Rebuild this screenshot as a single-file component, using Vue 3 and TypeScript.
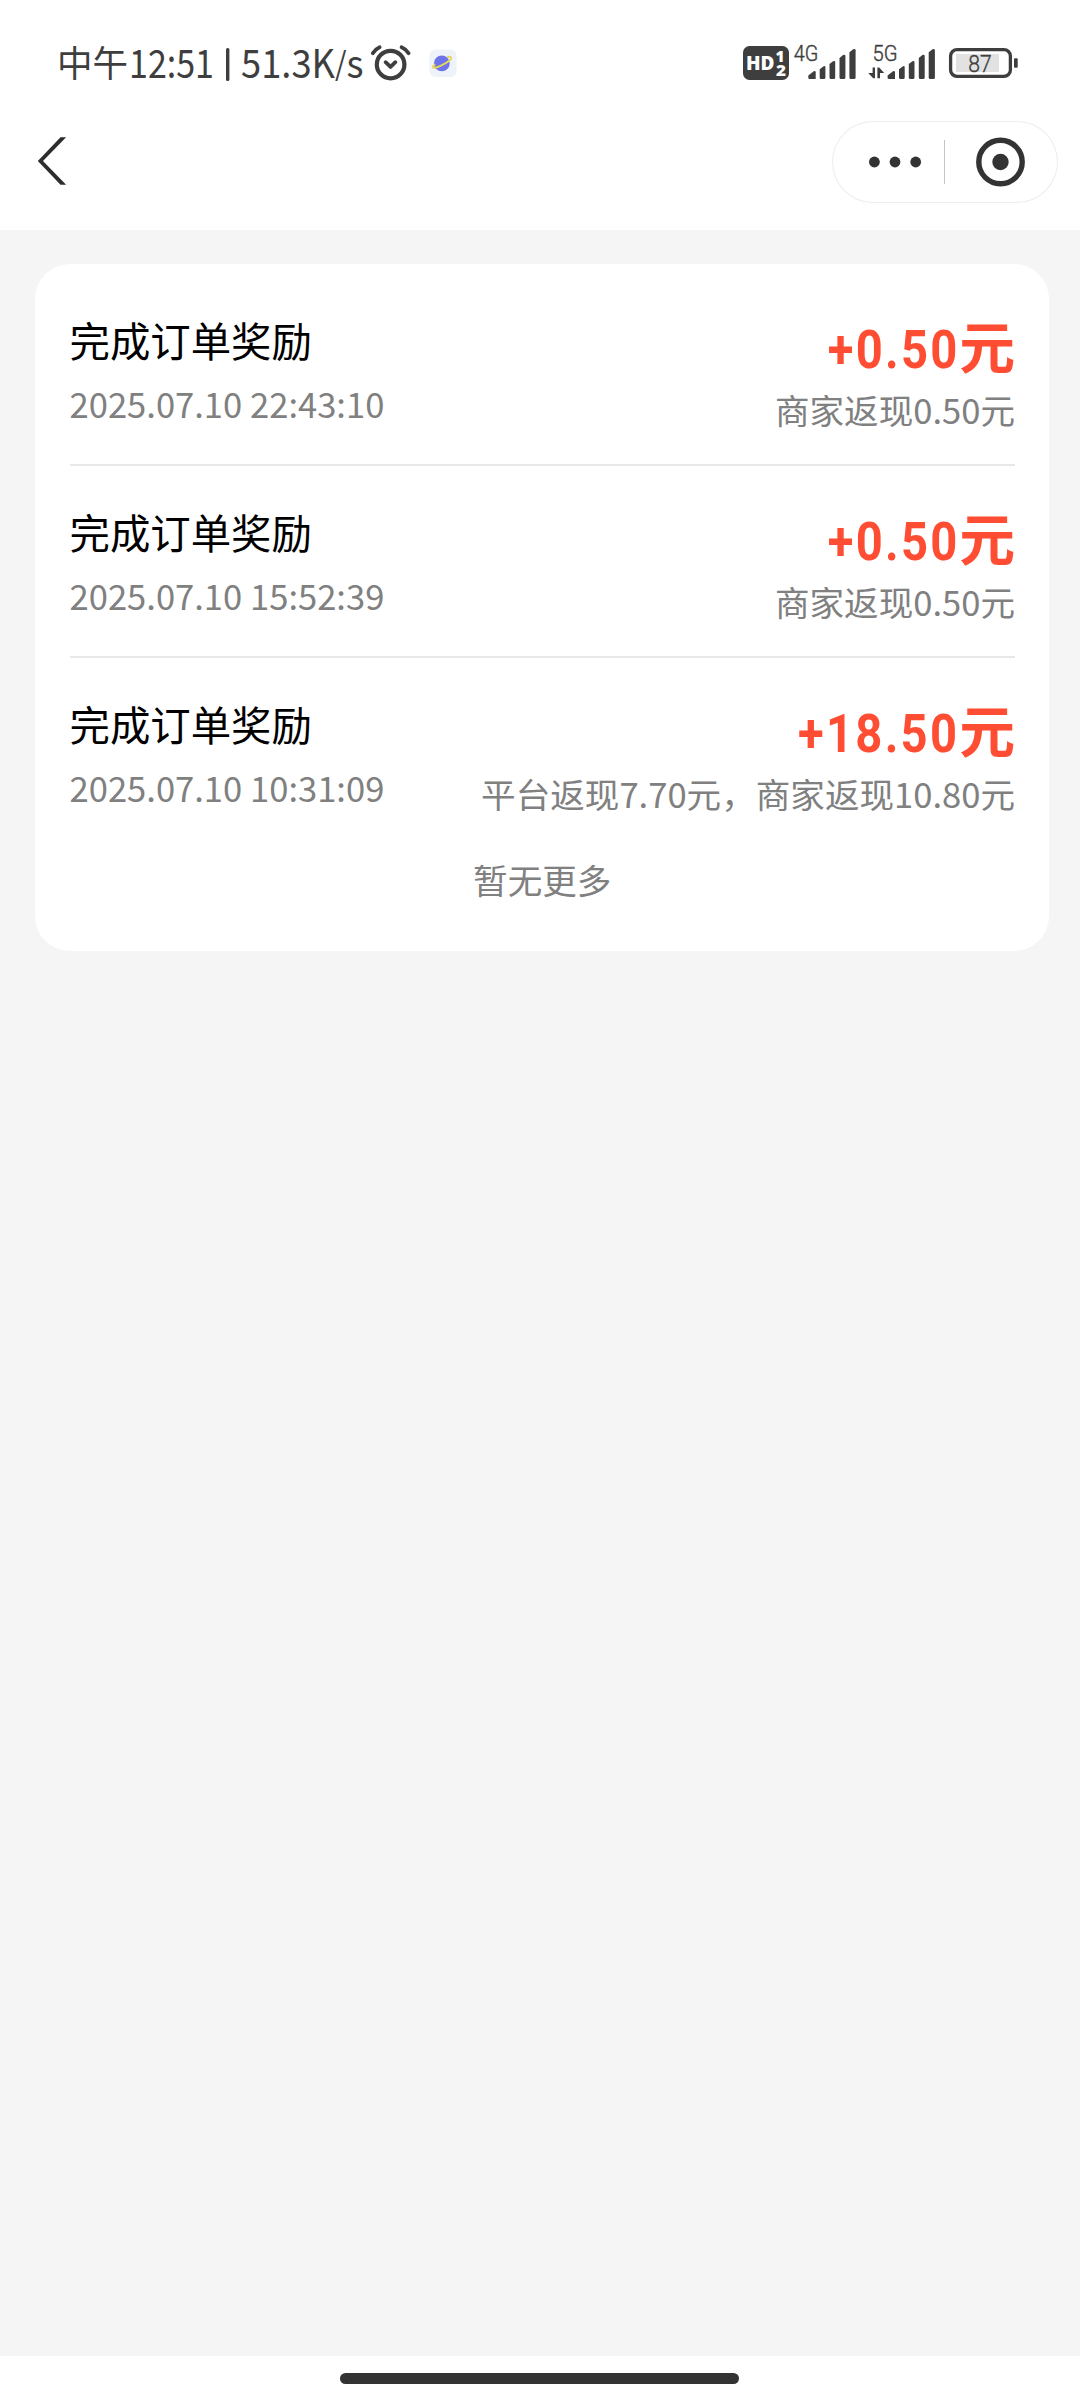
<script setup lang="ts">
interface RewardRecord {
  title: string
  time: string
  amount: string
  detail: string
}

const records: RewardRecord[] = [
  { title: '完成订单奖励', time: '2025.07.10 22:43:10', amount: '+0.50', detail: '商家返现0.50元' },
  { title: '完成订单奖励', time: '2025.07.10 15:52:39', amount: '+0.50', detail: '商家返现0.50元' },
  { title: '完成订单奖励', time: '2025.07.10 10:31:09', amount: '+18.50', detail: '平台返现7.70元，商家返现10.80元' },
]
</script>

<template>
  <div class="screen">
    <header class="top">
      <div class="status">
        <svg class="clock" width="310" height="64" viewBox="56 30 310 64">
          <text x="57" y="76.7" font-size="36.5" textLength="71" lengthAdjust="spacingAndGlyphs">中午</text>
          <text x="129" y="77.5" font-size="39.5" textLength="85" lengthAdjust="spacingAndGlyphs">12:51</text>
          <rect x="226" y="48" width="3.4" height="33" rx="1.5" />
          <text x="241" y="77.5" font-size="39.5" textLength="122.5" lengthAdjust="spacingAndGlyphs">51.3K<tspan font-size="32" dy="-2.2">/</tspan><tspan dy="2.2">s</tspan></text>
        </svg>
        <svg class="alarm" width="42" height="40" viewBox="370 43 42 40">
          <g fill="none" stroke="#3e3e3e" stroke-linecap="round" stroke-linejoin="round">
            <circle cx="390.6" cy="64.6" r="13.8" stroke-width="4.2" />
            <path d="M385.6 62.2l4.9 4.7 4.9-4.7" stroke-width="3.8" />
            <path d="M372.8 53.2q2.6-4.2 6.8-6M401.6 47.2q4.4 1.8 7 6" stroke-width="3.8" />
          </g>
        </svg>
        <svg class="planet" width="28" height="30" viewBox="429 48 28 30">
          <rect x="429.5" y="49.5" width="27" height="27.5" rx="6" fill="#eef2f9" />
          <circle cx="441.8" cy="63.4" r="7.9" fill="#6d74ea" />
          <path d="M434.6 64.6c-3.8 3.6-1.6 4.4 6 1.2 7-3 12.4-7.3 10-8.8-.7-.4-1.6-.2-2.6 0" fill="none" stroke="#e2d75a" stroke-width="1.9" stroke-linecap="round" />
        </svg>
        <div class="grow"></div>
        <svg class="radio" width="280" height="40" viewBox="741 43 280 40">
          <rect x="743" y="46" width="46" height="34" rx="6.5" fill="#3e3e3e" />
          <text class="hd" x="746" y="70.2" font-size="20" textLength="28.5" lengthAdjust="spacingAndGlyphs">HD</text>
          <text class="hd" x="775.5" y="62" font-size="16" textLength="9" lengthAdjust="spacingAndGlyphs">1</text>
          <text class="hd" x="776" y="76.2" font-size="16" textLength="10" lengthAdjust="spacingAndGlyphs">2</text>
          <text class="net" x="793.8" y="61" font-size="21.5" textLength="24.5" lengthAdjust="spacingAndGlyphs">4G</text>
          <g id="bars" fill="#3e3e3e">
            <path d="M808.3 77.5v-2l5.4-4.3q2-.8 2 1V79h-6q-1.4 0-1.4-1.5z" />
            <path d="M819.7 77.5v-8.3l3.6-2.800q2.100-.9 2.100 1V77.500q0 1.500-1.500 1.500h-2.700q-1.500 0-1.500-1.500z" />
            <path d="M829.5 77.5v-13.4l3.6-2.900q2.100-.9 2.100 1V77.500q0 1.500-1.500 1.500h-2.700q-1.500 0-1.500-1.500z" />
            <path d="M839.5 77.5v-19.4l3.6-3q2.3-.9 2.300 1V77.500q0 1.500-1.500 1.500h-2.900q-1.500 0-1.500-1.500z" />
            <path d="M849.4 77.5v-25.2l3.8-3.100q2.400-.9 2.400 1V77.500q0 1.500-1.500 1.500h-3.200q-1.500 0-1.500-1.500z" />
          </g>
          <use href="#bars" x="79.3" />
          <text class="net" x="872.5" y="61" font-size="21.5" textLength="25" lengthAdjust="spacingAndGlyphs">5G</text>
          <path d="M872.6 67.5h2.4v10.8h-1.8l-5-5.3h4.4zM877.4 78.3V67.5h1.8l5 5.5h-4.2v5.3z" fill="#3e3e3e" />
          <rect x="956" y="54" width="43" height="18" fill="#e2e2e2" />
          <rect x="950.6" y="49.6" width="59.8" height="26.8" rx="6.5" fill="none" stroke="#3e3e3e" stroke-width="3.3" />
          <rect x="1014" y="58.3" width="3.7" height="9.4" rx="1" fill="#3e3e3e" />
          <text class="pct" x="968.3" y="71.7" font-size="24.5" textLength="23.5" lengthAdjust="spacingAndGlyphs">87</text>
        </svg>
      </div>
      <nav class="nav">
        <svg class="back" width="30" height="48" viewBox="37 137 30 48">
          <path d="M60.5 137.300h5.6L43 161l23.100 23.700h-5.600L37.800 161z" fill="#2d2d2f" />
        </svg>
        <div class="capsule">
          <svg width="226" height="82" viewBox="832 121 226 82">
            <g fill="#333">
              <circle cx="874.4" cy="162" r="5.4" />
              <circle cx="895" cy="162" r="5.4" />
              <circle cx="915.7" cy="162" r="5.4" />
              <circle cx="1000.5" cy="162" r="8.2" />
            </g>
            <rect x="944" y="140" width="1" height="44" fill="#c4c4c4" />
            <circle cx="1000.5" cy="162" r="21.7" fill="none" stroke="#333" stroke-width="5.4" />
          </svg>
        </div>
      </nav>
    </header>

    <main class="body">
      <section class="card">
        <article v-for="record in records" :key="record.time" class="row">
          <div class="left">
            <div class="title">{{ record.title }}</div>
            <div class="time">{{ record.time }}</div>
          </div>
          <div class="right">
            <div class="amount"><span class="num">{{ record.amount }}</span><span class="unit">元</span></div>
            <div class="detail">{{ record.detail }}</div>
          </div>
        </article>
        <div class="end">暂无更多</div>
      </section>
    </main>

    <footer class="home"><div class="pill"></div></footer>
  </div>
</template>

<style>
body {
  margin: 0;
  background: #f5f5f5;
}
</style>

<style scoped>
.screen {
  width: 1080px;
  height: 2400px;
  display: flex;
  flex-direction: column;
  background: #f5f5f5;
  font-family: "Noto Sans CJK SC", "Noto Sans", sans-serif;
}
.top {
  height: 230px;
  background: #fff;
}
.status {
  height: 121px;
  box-sizing: border-box;
  padding: 30px 59px 0 56px;
  display: flex;
  align-items: flex-start;
}
.status svg {
  display: block;
  flex: none;
}
.clock {
  fill: #3e3e3e;
}
.alarm {
  margin: 13px 0 0 4px;
}
.planet {
  margin: 18px 0 0 17px;
}
.radio {
  margin-top: 13px;
}
.grow {
  flex: 1;
}
.hd {
  font-family: "Open Sans", sans-serif;
  font-weight: 800;
  fill: #fff;
}
.net,
.pct {
  font-family: Roboto, sans-serif;
  font-weight: 300;
  fill: #3e3e3e;
  stroke: #3e3e3e;
  stroke-width: 0.4px;
}
.nav {
  height: 82px;
  padding: 0 22px 0 37px;
  display: flex;
  align-items: center;
  justify-content: space-between;
}
.back {
  display: block;
  margin-bottom: 2px;
}
.capsule {
  width: 226px;
  height: 82px;
  border-radius: 41px;
  box-shadow: inset 0 0 0 1px #ededed;
}
.capsule svg {
  display: block;
}
.body {
  flex: 1;
  padding: 34px 31px 0 35px;
}
.card {
  height: 687px;
  box-sizing: border-box;
  padding: 10px 34px 0 34.5px;
  border-radius: 35px;
  background: #fff;
}
.row {
  height: 192px;
  box-sizing: border-box;
  padding-top: 38px;
  display: flex;
  justify-content: space-between;
  white-space: nowrap;
  border-bottom: 2px solid #e8e8e8;
}
.row:nth-child(3) {
  border-bottom-color: transparent;
}
.title {
  font-size: 40.4px;
  line-height: 56px;
  color: #000;
}
.time,
.detail,
.end {
  font-size: 34.6px;
  line-height: 50px;
  color: #808080;
}
.time {
  margin-top: 10px;
}
.right {
  text-align: right;
}
.amount {
  display: flex;
  justify-content: flex-end;
  align-items: flex-start;
  height: 72px;
  line-height: 70px;
  color: #ff4d33;
  font-weight: 700;
}
.num {
  margin-top: 2.5px;
  font-family: Roboto, sans-serif;
  font-size: 54.2px;
  letter-spacing: 2.6px;
  transform: scaleX(0.87);
  transform-origin: right center;
}
.unit {
  margin-top: -3px;
  font-size: 55.8px;
}
.end {
  text-align: center;
  margin-top: 4px;
}
.home {
  height: 44px;
  padding-top: 17px;
  box-sizing: border-box;
  background: #fff;
}
.pill {
  width: 399px;
  height: 10.5px;
  margin-left: 340px;
  border-radius: 6px;
  background: #333;
}
</style>
